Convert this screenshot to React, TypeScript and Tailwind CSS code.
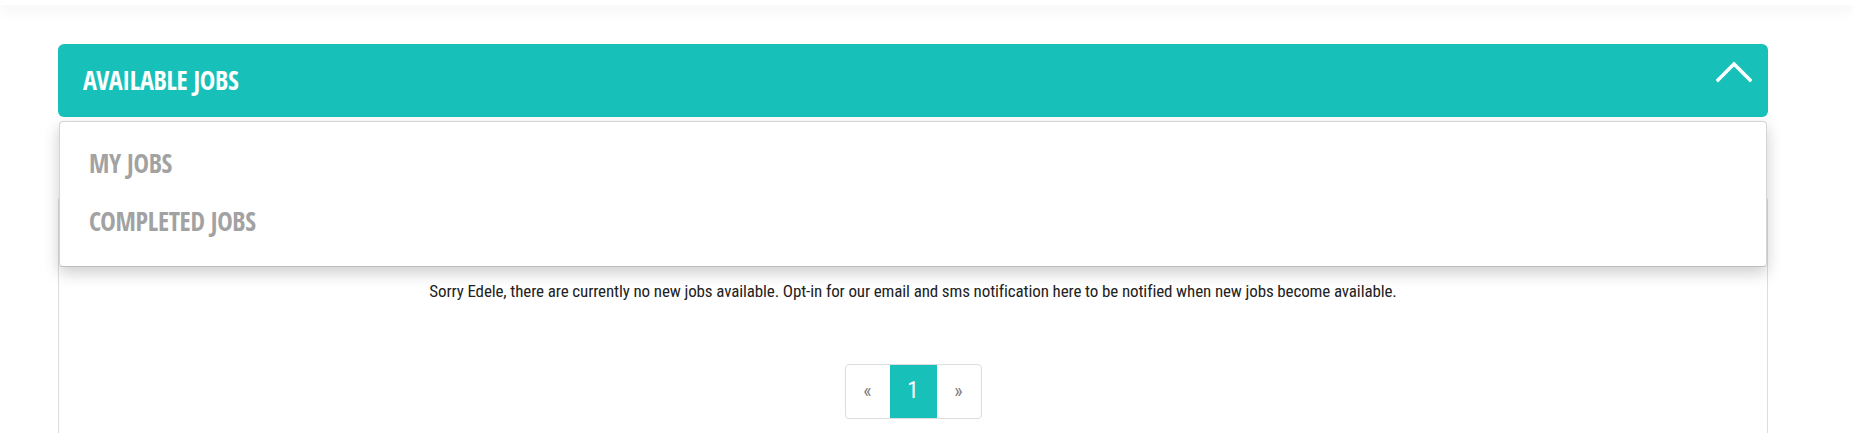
const cond = { fontFamily: '"Open Sans Condensed", "DejaVu Sans Condensed", sans-serif' };
const body = { fontFamily: '"Roboto Condensed", "DejaVu Sans Condensed", sans-serif' };

function MenuItem({ label }: { label: string }) {
  return (
    <div className="h-[58px] flex items-center pl-[29px] text-[26px] font-bold text-[#a2a2a2] tracking-[-0.3px]">
      {label}
    </div>
  );
}

function Pagination() {
  return (
    <div className="flex justify-center" style={body}>
      <div className="flex h-[55px] border border-[#dddddd] rounded-[4px] overflow-hidden">
        <div className="w-[44px] flex items-center justify-center text-[20px] text-[#808080]">«</div>
        <div className="w-[47px] flex items-center justify-center bg-[#17c1b9] text-[23px] text-white">1</div>
        <div className="w-[44px] flex items-center justify-center text-[20px] text-[#808080]">»</div>
      </div>
    </div>
  );
}

export default function App() {
  return (
    <div className="h-[433px] bg-white overflow-hidden" style={cond}>
      <div className="h-[5px] bg-white shadow-[0_4px_14px_rgba(0,0,0,0.09)]" />

      <div className="relative ml-[58px] w-[1710px] mt-[39px]">
        <div className="h-[73px] rounded-[6px] bg-[#17c1b9] flex items-center justify-between pl-[25px] pr-[16px]">
          <span className="text-white text-[26px] font-bold tracking-[-0.3px]">AVAILABLE JOBS</span>
          <svg width="36" height="24" viewBox="0 0 36 24" fill="none" className="self-start mt-[17px]">
            <polyline points="2,19 18,3 34,19" stroke="white" strokeWidth="3.4" strokeLinecap="square" />
          </svg>
        </div>

        <div className="mt-[80px] border-x border-t border-[#dddddd] rounded-t-[4px] h-[236px]">
          <p className="mt-[81px] text-center text-[17px] text-[#222222] tracking-[-0.12px]" style={body}>
            Sorry Edele, there are currently no new jobs available. Opt-in for our email and sms notification here to be notified when new jobs become available.
          </p>
          <div className="mt-[59px]">
            <Pagination />
          </div>
        </div>

        <div className="absolute left-[1px] right-[1px] top-[77px] h-[146px] bg-white border border-[#d4d4d4] border-b-[#bdbdbd] rounded-[4px] shadow-[0_6px_16px_rgba(0,0,0,0.2)] pt-[12px]">
          <MenuItem label="MY JOBS" />
          <MenuItem label="COMPLETED JOBS" />
        </div>
      </div>
    </div>
  );
}
